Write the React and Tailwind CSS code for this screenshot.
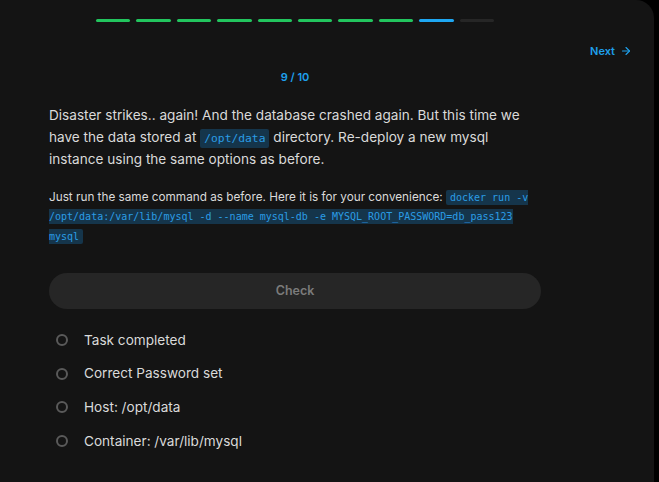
import { ArrowRight } from 'lucide-react';

const steps = Array.from({ length: 10 }, (_, i) => i);

const checks = ['Task completed', 'Correct Password set', 'Host: /opt/data', 'Container: /var/lib/mysql'];

const Code = ({ children, className = '' }) => (
  <code
    className={`bg-[#15354b] text-[#2b9de6] px-[4px] rounded-[2px] font-['DejaVu_Sans_Mono',monospace] ${className}`}
  >
    {children}
  </code>
);

export default function App() {
  return (
    <div className="w-[659px] h-[482px] bg-black font-['Inter',sans-serif] overflow-hidden">
      <div className="w-[654px] h-[482px] bg-[#141414] rounded-tr-[18px] pt-[19px]">
        {/* progress */}
        <div className="w-[492px] ml-[49px] flex justify-center">
          <div className="w-[398px] flex gap-[6px]">
            {steps.map((i) => (
              <div
                key={i}
                className={
                  i < 8
                    ? 'flex-1 h-[3px] rounded-full bg-[#22c55e]'
                    : i === 8
                    ? 'flex-1 h-[3px] rounded-full bg-[#1ea7f2]'
                    : 'flex-1 h-[3px] rounded-full bg-[#262626]'
                }
              />
            ))}
          </div>
        </div>

        {/* next */}
        <div className="flex justify-end pr-[22px] mt-[21px]">
          <button className="flex items-center gap-[5px] text-[11px] font-semibold text-[#1ea0ec]">
            Next
            <ArrowRight size={12} strokeWidth={2.2} />
          </button>
        </div>

        <div className="w-[492px] ml-[49px]">
          <p className="text-center text-[11px] font-semibold text-[#1ea0ec] mt-[9px]">9 / 10</p>

          <p className="mt-[20px] w-[540px] text-[13.6px] leading-[21.5px] text-[#dadada]">
            Disaster strikes.. again! And the database crashed again. But this time we
            <br />
            have the data stored at <Code className="text-[11.3px] py-[3px]">/opt/data</Code> directory. Re-deploy a
            new mysql
            <br />
            instance using the same options as before.
          </p>

          <p className="mt-[17px] w-[540px] text-[11.75px] leading-[19.5px] text-[#dadada]">
            Just run the same command as before. Here it is for your convenience:{' '}
            <Code className="text-[10px] py-[2px]">
              docker run -v{' '}
              <br />
              /opt/data:/var/lib/mysql -d --name mysql-db -e MYSQL_ROOT_PASSWORD=db_pass123{' '}
              <br />
              mysql
            </Code>
          </p>

          <button className="mt-[27px] w-full h-[36px] rounded-full bg-[#262626] text-[12.5px] font-semibold text-[#7b7b7b]">
            Check
          </button>

          <ul className="mt-[14px] flex flex-col">
            {checks.map((c) => (
              <li key={c} className="h-[33.7px] flex items-center">
                <span className="ml-[7px] w-[12px] h-[12px] rounded-full border-2 border-[#5a5a5a]" />
                <span className="ml-[16px] text-[13.6px] text-[#dadada]">{c}</span>
              </li>
            ))}
          </ul>
        </div>
      </div>
    </div>
  );
}
